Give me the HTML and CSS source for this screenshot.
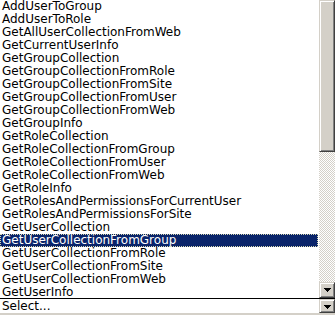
FILE: index.html
```html
<!DOCTYPE html>
<html>
<head>
<meta charset="utf-8">
<link rel="stylesheet" href="styles.css">
</head>
<body>
<div class="frame">
  <div class="listbox">
    <ul class="items">
      <li>AddUserToGroup</li>
      <li>AddUserToRole</li>
      <li>GetAllUserCollectionFromWeb</li>
      <li>GetCurrentUserInfo</li>
      <li>GetGroupCollection</li>
      <li>GetGroupCollectionFromRole</li>
      <li>GetGroupCollectionFromSite</li>
      <li>GetGroupCollectionFromUser</li>
      <li>GetGroupCollectionFromWeb</li>
      <li>GetGroupInfo</li>
      <li>GetRoleCollection</li>
      <li>GetRoleCollectionFromGroup</li>
      <li>GetRoleCollectionFromUser</li>
      <li>GetRoleCollectionFromWeb</li>
      <li>GetRoleInfo</li>
      <li>GetRolesAndPermissionsForCurrentUser</li>
      <li>GetRolesAndPermissionsForSite</li>
      <li>GetUserCollection</li>
      <li class="selected">GetUserCollectionFromGroup</li>
      <li>GetUserCollectionFromRole</li>
      <li>GetUserCollectionFromSite</li>
      <li>GetUserCollectionFromWeb</li>
      <li>GetUserInfo</li>
    </ul>
    <div class="scrollbar">
      <div class="thumb btn"></div>
      <div class="track"></div>
      <div class="arrow-btn btn">
        <svg width="7" height="4" viewBox="0 0 7 4" shape-rendering="crispEdges"><path d="M0 0h7v1H0z M1 1h5v1H1z M2 2h3v1H2z M3 3h1v1H3z" fill="#000"/></svg>
      </div>
    </div>
  </div>
  <div class="combo">
    <span class="value">Select...</span>
    <div class="drop-btn btn">
      <svg width="7" height="4" viewBox="0 0 7 4" shape-rendering="crispEdges"><path d="M0 0h7v1H0z M1 1h5v1H1z M2 2h3v1H2z M3 3h1v1H3z" fill="#000"/></svg>
    </div>
  </div>
</div>
</body>
</html>
```
FILE: styles.css
```css
html, body {
  margin: 0;
  padding: 0;
  background: #fff;
}
.frame {
  width: 335px;
  height: 315px;
  overflow: hidden;
  font-family: "DejaVu Sans", Verdana, sans-serif;
  font-size: 12px;
  color: #000;
}
.listbox {
  display: flex;
  height: 298px;
}
.items {
  list-style: none;
  margin: 0;
  padding: 0;
  flex: 1;
  overflow: hidden;
  padding-right: 1px;
}
.items li {
  height: 13px;
  line-height: 12px;
  padding-left: 2px;
  white-space: nowrap;
  box-sizing: border-box;
}
.items li.selected {
  background: #0a246a;
  color: #fff;
  outline: 1px dotted #d8d8b0;
  outline-offset: -1px;
}
.scrollbar {
  width: 16px;
  display: flex;
  flex-direction: column;
}
.btn {
  box-sizing: border-box;
  background: #d4d0c8;
  border: 1px solid;
  border-color: #d4d0c8 #404040 #404040 #d4d0c8;
  box-shadow: inset 1px 1px #fff, inset -1px -1px #808080;
}
.thumb {
  height: 152px;
}
.track {
  flex: 1;
  background: repeating-conic-gradient(#d4d0c8 0 25%, #fff 0 50%) 0 0 / 2px 2px;
}
.arrow-btn {
  height: 16px;
  display: flex;
  align-items: center;
  justify-content: center;
}
.arrow-btn svg, .drop-btn svg {
  display: block;
}
.combo {
  display: flex;
  align-items: stretch;
  height: 17px;
  box-sizing: border-box;
  border-top: 1px solid #000;
  border-bottom: 2px solid #d4d0c8;
  box-shadow: inset 0 -1px #fff;
}
.value {
  flex: 1;
  padding-left: 2px;
  line-height: 14px;
}
.drop-btn {
  width: 16px;
  display: flex;
  align-items: center;
  justify-content: center;
  padding-top: 1px;
}
```
